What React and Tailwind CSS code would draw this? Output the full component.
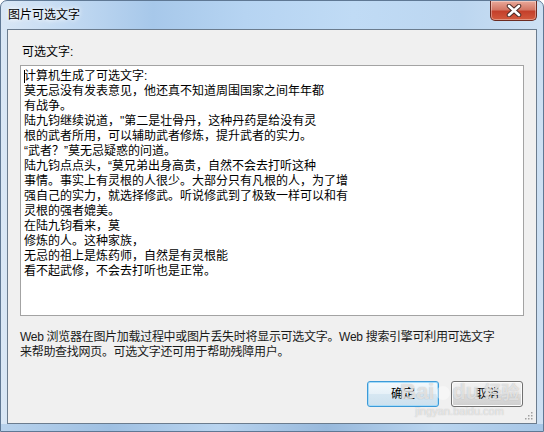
import React from 'react';

const lines = [
  '计算机生成了可选文字:',
  '莫无忌没有发表意见，他还真不知道周围国家之间年年都',
  '有战争。',
  '陆九钧继续说道，"第二是壮骨丹，这种丹药是给没有灵',
  '根的武者所用，可以辅助武者修炼，提升武者的实力。',
  '“武者？”莫无忌疑惑的问道。',
  '陆九钧点点头，“莫兄弟出身高贵，自然不会去打听这种',
  '事情。事实上有灵根的人很少。大部分只有凡根的人，为了增',
  '强自己的实力，就选择修武。听说修武到了极致一样可以和有',
  '灵根的强者媲美。',
  '在陆九钧看来，莫',
  '修炼的人。这种家族，',
  '无忌的祖上是炼药师，自然是有灵根能',
  '看不起武修，不会去打听也是正常。',
];

const font = { fontFamily: '"Liberation Sans", "Noto Sans CJK SC", sans-serif' };

const CloseButton = () => (
  <div className="w-[47px] h-[20px] rounded-b-[5px] border border-t-0 border-[#6b2b22] bg-[linear-gradient(#e9a99a_0%,#d47866_45%,#c4402b_55%,#d35a3e_100%)] flex items-center justify-center shadow-[inset_0_0_0_1px_rgba(255,255,255,0.35)]">
    <svg width="16" height="13" viewBox="0 0 16 13">
      <path d="M3 2 L13 11 M13 2 L3 11" stroke="#4a2a26" strokeWidth="4.5" strokeLinecap="round" />
      <path d="M3 2 L13 11 M13 2 L3 11" stroke="#ffffff" strokeWidth="2.6" strokeLinecap="round" />
    </svg>
  </div>
);

const Grip = () => (
  <svg width="10" height="10" viewBox="0 0 10 10" className="absolute right-[3px] bottom-[3px]">
    {[[8, 2], [8, 5], [5, 5], [8, 8], [5, 8], [2, 8]].map(([x, y]) => (
      <rect key={`${x}-${y}`} x={x} y={y} width="1.5" height="1.5" fill="#a0a0a0" />
    ))}
  </svg>
);

export default function App() {
  return (
    <div
      style={font}
      className="w-[544px] h-[432px] relative flex flex-col rounded-t-[7px] border border-[#5f7894] bg-[linear-gradient(90deg,#d9e7f5_0%,#c3daf2_12%,#a7c8ea_28%,#b6d4f2_45%,#c0dbf5_65%,#bcd6f0_85%,#cde0f3_100%)] overflow-hidden"
    >
      {/* Title bar */}
      <div className="h-[28px] flex items-start justify-between pl-[7px] pr-[6px]">
        <span className="mt-[7px] text-[12px] leading-[15px] text-black [text-shadow:0_0_6px_#fff,0_0_4px_#fff]">
          图片可选文字
        </span>
        <CloseButton />
      </div>

      {/* Client area */}
      <div className="mx-[6px] flex-1 relative border border-[#6b7c8e] bg-[#f0f0f0] flex flex-col">
        <div className="ml-[14px] mt-[15px] text-[12px] leading-[15px] text-black">可选文字:</div>

        <div className="mx-[12px] mt-[5px] h-[251px] border border-[#a3a3a3] bg-white pl-[3px] pt-[3px] text-[12px] leading-[15px] text-black relative">
          <span className="absolute left-[3px] top-[4px] w-px h-[13px] bg-black" />
          {lines.map((l, i) => (
            <div key={i} className="whitespace-nowrap">{l}</div>
          ))}
        </div>

        <div className="ml-[12px] mt-[14px] text-[12px] leading-[15px] tracking-[-0.3px] text-[#1a1a1a]">
          <div>Web 浏览器在图片加载过程中或图片丢失时将显示可选文字。Web 搜索引擎可利用可选文字</div>
          <div>来帮助查找网页。可选文字还可用于帮助残障用户。</div>
        </div>

        <div className="mt-[21px] mr-[13px] flex justify-end gap-[12px]">
          <button className="w-[72px] h-[26px] rounded-[3px] border border-[#3c9ad8] bg-[linear-gradient(#f4f9fc_0%,#e6f1f8_48%,#d6e7f2_52%,#cde1ee_100%)] shadow-[inset_0_0_0_1px_#a6dbf8] text-[12px] text-black">
            确定
          </button>
          <button className="w-[72px] h-[26px] rounded-[3px] border border-[#707070] bg-[linear-gradient(#f2f2f2_0%,#ebebeb_48%,#dddddd_52%,#cfcfcf_100%)] shadow-[inset_0_0_0_1px_#fcfcfc] text-[12px] text-black">
            取消
          </button>
        </div>

        <Grip />

        {/* watermark */}
        <div className="absolute left-[392px] top-[350px] pointer-events-none text-white/60 flex flex-col items-center [text-shadow:0_0_1px_rgba(150,150,150,0.7)]">
          <span className="text-[22px] leading-[24px] font-bold">
            Bai<span className="inline-block w-[14px] h-[14px] mx-[2px] rounded-full bg-white/40 align-middle" />du<span className="ml-[4px] text-[18px]">经验</span>
          </span>
          <span className="text-[11px] leading-[13px]">jingyan.baidu.com</span>
        </div>
      </div>

      {/* Bottom frame */}
      <div className="h-[7px] bg-[linear-gradient(90deg,#b8d2ec_0%,#9fc0e2_20%,#b9d4ef_40%,#98b9dc_60%,#bad5ef_80%,#a7c6e6_100%)]" />
    </div>
  );
}
